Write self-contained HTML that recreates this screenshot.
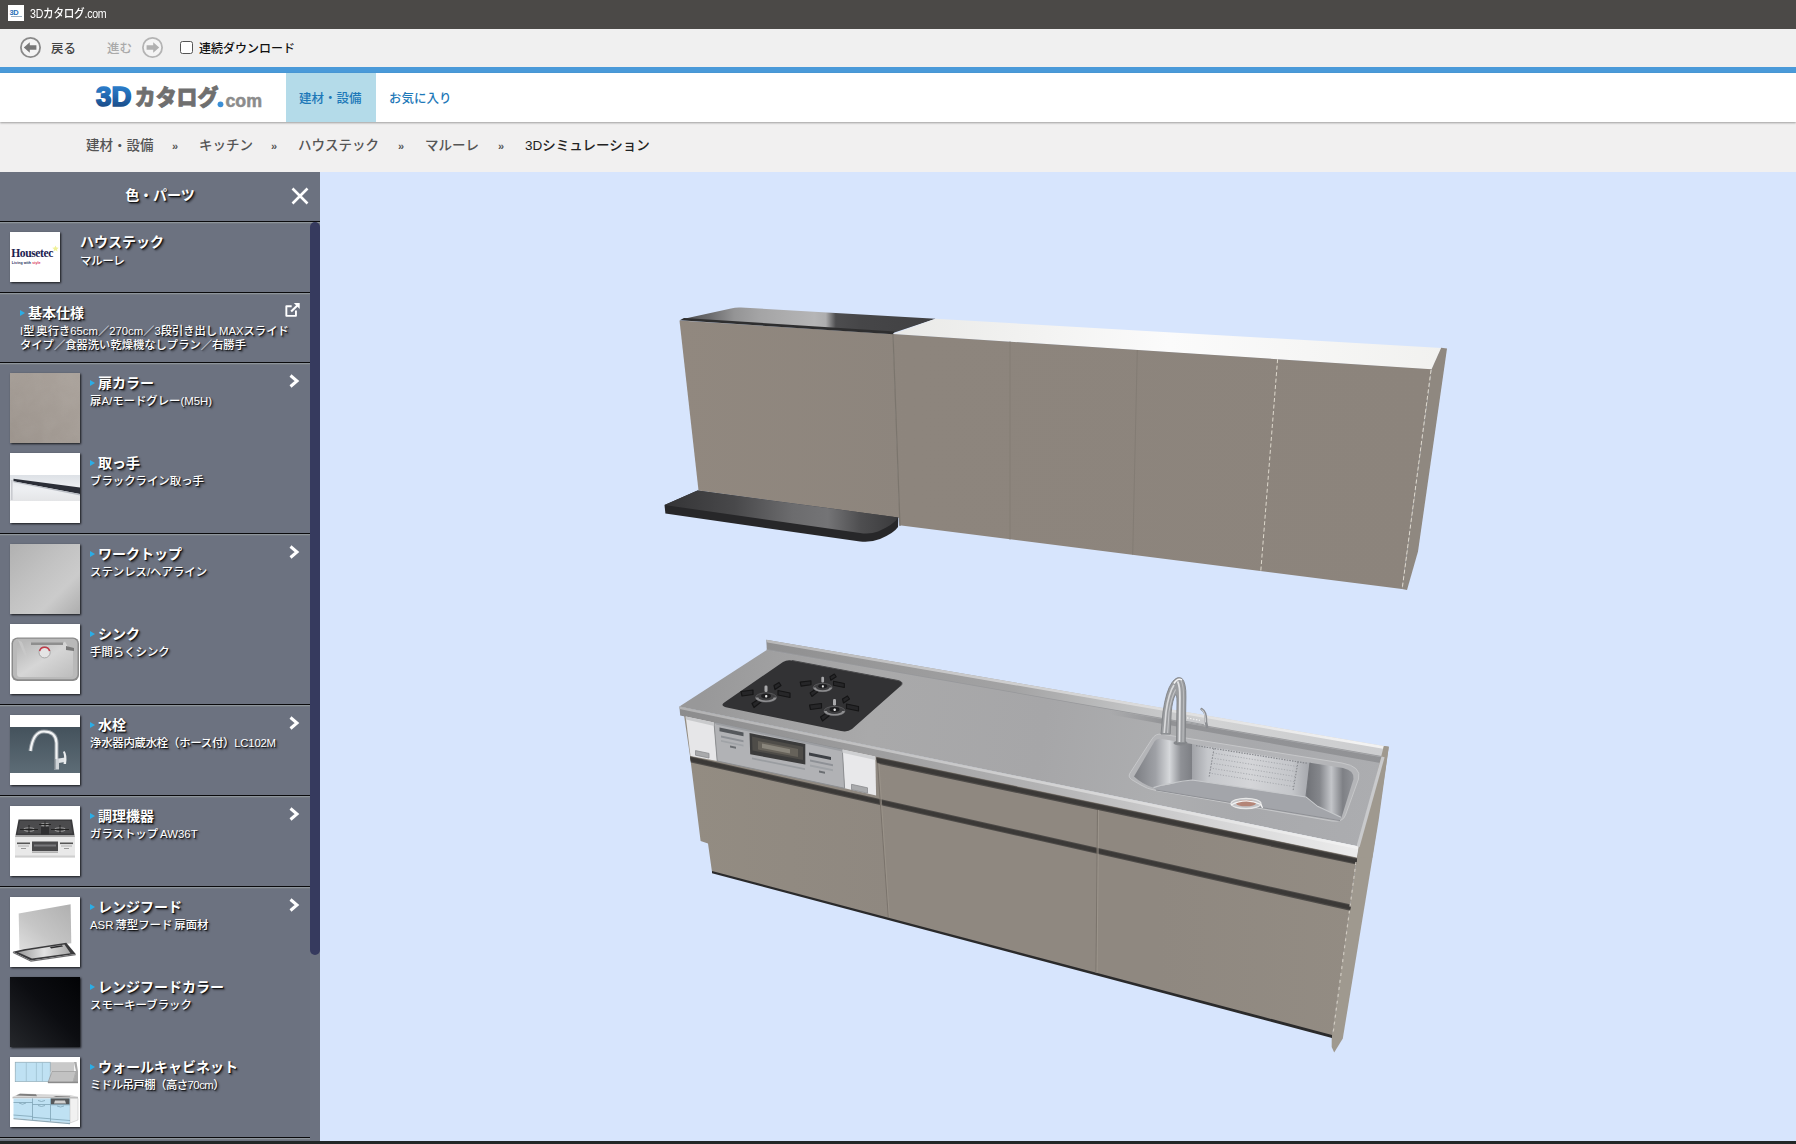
<!DOCTYPE html>
<html lang="ja"><head><meta charset="utf-8"><title>3Dカタログ.com</title>
<style>
*{box-sizing:border-box;margin:0;padding:0}
html,body{width:1796px;height:1144px;overflow:hidden;background:#d7e5fd;font-family:"Liberation Sans","Noto Sans CJK JP",sans-serif;}
#titlebar{position:absolute;left:0;top:0;width:1796px;height:29px;background:#4b4947;color:#fff;font-size:12px;font-weight:500}
#titlebar .ico{position:absolute;left:8px;top:5px;width:16px;height:16px;background:#fff;}
#titlebar .t{position:absolute;left:30px;top:6px;line-height:17px;font-size:12px;letter-spacing:-0.3px;transform:scaleX(.885);transform-origin:0 0;white-space:nowrap}
#toolbar{position:absolute;left:0;top:29px;width:1796px;height:38px;background:#f0f0f0;font-size:12.5px;color:#333;font-weight:500}
#bluebar{position:absolute;left:0;top:67px;width:1796px;height:6px;background:#4a9ad9}
#header{position:absolute;left:0;top:73px;width:1796px;height:49px;background:#fff;box-shadow:0 1px 2px rgba(0,0,0,.35);z-index:3}
#crumb{position:absolute;left:0;top:122px;width:1796px;height:50px;background:#f1f0f0;font-size:13.5px;color:#555;font-weight:500}
#side{position:absolute;left:0;top:172px;width:320px;height:969px;background:#6c7280;overflow:hidden;color:#fff}
#canvas{position:absolute;left:320px;top:172px;width:1476px;height:969px;background:#d7e5fd}
#bottombar{position:absolute;left:0;top:1141px;width:1796px;height:3px;background:#222727;z-index:5}
.sh{text-shadow:1px 1px 1px rgba(0,0,0,.85),2px 2px 2px rgba(0,0,0,.45)}
.hline{position:absolute;left:0;width:310px;height:3px;background:linear-gradient(#0a0a0c 0,#0a0a0c 1.2px,#8d949b 1.2px,#8d949b 2.2px,#747a83 2.2px)}
.thumb svg{display:block}
.thumb{position:absolute;left:10px;width:70px;height:70px;background:#fff;box-shadow:1px 1px 2px rgba(0,0,0,.8);overflow:hidden}
.it{position:absolute;left:98px;font-size:14px;font-weight:bold;line-height:18px;white-space:nowrap}
.it:before{content:"";position:absolute;left:-8.5px;top:5.5px;border-left:5.5px solid #2badE6;border-top:3.5px solid transparent;border-bottom:3.5px solid transparent}
.ds{font-weight:500;word-spacing:-1.2px;position:absolute;left:90px;font-size:11.4px;line-height:15px;white-space:nowrap}
.gg{position:absolute;top:15px;line-height:18px;font-size:11px;font-weight:bold;color:#555}
.chev{position:absolute;left:288px;width:12px;height:14px}
</style></head><body>
<div id="titlebar"><div class="ico"><span style="position:absolute;left:1.5px;top:3.5px;font-size:7.5px;line-height:8px;font-weight:bold;color:#2a6fb8;letter-spacing:-.5px;font-family:'Liberation Sans',sans-serif">3D</span><span style="position:absolute;left:2.5px;top:10.6px;width:11px;height:1.6px;background:#9ab0c4;"></span></div><div class="t">3Dカタログ.com</div></div>
<div id="toolbar">
<svg style="position:absolute;left:19px;top:7px" width="23" height="23" viewBox="0 0 23 23"><circle cx="11.5" cy="11.5" r="9.6" fill="#f4f4f4" stroke="#8a8a8a" stroke-width="1.8"/><path d="M4.8 11.5 L10.8 6.2 V9.2 H17.4 V13.8 H10.8 V16.800 Z" fill="#777"/></svg>
<span style="position:absolute;left:51px;top:12px;line-height:16px;color:#444">戻る</span>
<span style="position:absolute;left:107px;top:12px;line-height:16px;color:#aaa">進む</span>
<svg style="position:absolute;left:141px;top:7px" width="23" height="23" viewBox="0 0 23 23"><circle cx="11.5" cy="11.5" r="9.6" fill="#f4f4f4" stroke="#b4b4b4" stroke-width="1.8"/><path d="M18.2 11.5 L12.2 6.2 V9.2 H5.6 V13.8 H12.2 V16.8 Z" fill="#b0b0b0"/></svg>
<span style="position:absolute;left:180px;top:12px;width:13px;height:13px;border:1px solid #555;border-radius:2.5px;background:#fff"></span>
<span style="position:absolute;left:199px;top:12px;line-height:16px;color:#111;font-size:12px">連続ダウンロード</span>
</div>
<div id="bluebar"></div>
<div id="header">
<svg id="logo" style="position:absolute;left:90px;top:8px" width="180" height="34" viewBox="90 81 180 34">
<defs><linearGradient id="lg3d" x1="0" y1="87" x2="0" y2="107" gradientUnits="userSpaceOnUse"><stop offset="0" stop-color="#2b7cc8"/><stop offset=".5" stop-color="#2166ae"/><stop offset="1" stop-color="#1b4c88"/></linearGradient></defs>
<text x="96" y="106.4" font-family="'Liberation Sans',sans-serif" font-weight="bold" font-size="27.6" fill="url(#lg3d)" stroke="url(#lg3d)" stroke-width="1.6" stroke-linejoin="miter" textLength="35.4" lengthAdjust="spacingAndGlyphs">3D</text>
<text x="134.8" y="105" font-family="'Noto Sans CJK JP','Liberation Sans',sans-serif" font-weight="900" font-size="21.6" fill="#6f6f6f" stroke="#6f6f6f" stroke-width=".8" textLength="83.5" lengthAdjust="spacingAndGlyphs">カタログ</text>
<circle cx="220.5" cy="104.3" r="2.9" fill="#3b8fd6"/>
<text x="225.4" y="107" font-family="'Liberation Sans',sans-serif" font-weight="bold" font-size="17.6" fill="#8c8c8c" stroke="#8c8c8c" stroke-width=".5" textLength="36.6" lengthAdjust="spacingAndGlyphs">com</text>
</svg>
<div style="position:absolute;left:286px;top:0;width:90px;height:49px;background:#b4dbe9"></div>
<span style="position:absolute;left:299px;top:18px;font-size:12.5px;line-height:16px;color:#1d78b8;font-weight:500">建材・設備</span>
<span style="position:absolute;left:389px;top:18px;font-size:12.5px;line-height:16px;color:#1d78b8;font-weight:500">お気に入り</span>
</div>
<div id="crumb">
<span style="position:absolute;left:86px;top:15px;line-height:18px">建材・設備</span>
<span class="gg" style="left:172px">»</span>
<span style="position:absolute;left:199px;top:15px;line-height:18px">キッチン</span>
<span class="gg" style="left:271px">»</span>
<span style="position:absolute;left:298px;top:15px;line-height:18px">ハウステック</span>
<span class="gg" style="left:398px">»</span>
<span style="position:absolute;left:425px;top:15px;line-height:18px">マルーレ</span>
<span class="gg" style="left:498px">»</span>
<span style="position:absolute;left:525px;top:15px;line-height:18px;color:#222">3Dシミュレーション</span>
</div>
<div id="side">
<div class="sh" style="position:absolute;left:0;top:13px;width:320px;text-align:center;font-size:14px;font-weight:bold;line-height:20px">色・パーツ</div>
<svg style="position:absolute;left:291px;top:15px" width="18" height="18" viewBox="0 0 18 18"><path d="M1.5 1.5 L16.5 16.5 M16.5 1.5 L1.5 16.5" stroke="#fff" stroke-width="2.6"/></svg>
<div class="hline" style="top:49px;width:320px"></div>
<div id="sbar" style="position:absolute;left:310px;top:50px;width:10px;height:733px;background:#363a5e;border-radius:5px 5px 5px 5px"></div>
<div class="thumb" id="t0" style="top:60px;width:50px;height:50px"><div style="position:absolute;left:1.2px;top:16.3px;font-family:'Liberation Serif',serif;font-weight:bold;font-size:11.6px;line-height:12px;color:#1c2250;letter-spacing:-.42px;white-space:nowrap">Housetec</div>
<div style="position:absolute;left:1.8px;top:29.4px;font-size:3.6px;line-height:5px;color:#2a3060;white-space:nowrap;letter-spacing:.05px;font-weight:bold">Living with <span style="color:#d8305a">style</span></div>
<svg style="position:absolute;left:41.5px;top:13px;filter:blur(.4px)" width="7" height="7" viewBox="0 0 9 9"><path d="M4.5 0.5 L5.7 3.3 L8.6 3.6 L6.4 5.5 L7.1 8.4 L4.5 6.9 L1.9 8.4 L2.6 5.5 L0.4 3.6 L3.3 3.3Z" fill="#eef08c" opacity=".9"/></svg></div>
<div class="sh" style="position:absolute;left:80px;top:61px;font-size:14px;font-weight:bold;line-height:18px">ハウステック</div>
<div class="sh" style="position:absolute;left:80px;top:81px;font-size:11.5px;letter-spacing:-.4px;font-weight:500;line-height:16px">マルーレ</div>
<div class="hline" style="top:120px"></div>
<div class="it sh" style="left:28px;top:132px;font-size:14px">基本仕様</div>
<svg style="position:absolute;left:284px;top:130px" width="17.5" height="16" viewBox="0 0 16 15"><path d="M11 8 V13 H2 V4 H7" fill="none" stroke="#fff" stroke-width="1.8" stroke-linejoin="round"/><path d="M6.5 9 L13.5 2" stroke="#fff" stroke-width="2"/><path d="M9 1 H14.5 V6.5 Z" fill="#fff"/></svg>
<div class="ds sh" style="left:20px;top:152px;font-size:11.3px;line-height:14px">I型 奥行き65cm／270cm／3段引き出し MAXスライド<br>タイプ／食器洗い乾燥機なしプラン／右勝手</div>
<div class="hline" style="top:190px"></div>
<div class="thumb" id="t1" style="top:201px"><svg width="70" height="70"><defs><filter id="ns1" x="0" y="0" width="100%" height="100%"><feTurbulence type="fractalNoise" baseFrequency=".06" numOctaves="3" seed="4"/><feColorMatrix values="0 0 0 0 .5  0 0 0 0 .47  0 0 0 0 .44  .5 .3 0 0 -.28"/></filter></defs><linearGradient id="d1" x1="1" y1="0" x2="0" y2="1"><stop offset="0" stop-color="#aba39c"/><stop offset="1" stop-color="#9c948d"/></linearGradient><rect width="70" height="70" fill="url(#d1)"/><rect width="70" height="70" filter="url(#ns1)" opacity=".45"/></svg></div>
<div class="it sh" style="top:202px">扉カラー</div>
<div class="ds sh" style="top:222px">扉A/モードグレー(M5H)</div>
<svg class="chev" style="top:202px" viewBox="0 0 12 14"><path d="M2.5 1.5 L9 7 L2.5 12.5" fill="none" stroke="#fff" stroke-width="3" stroke-linejoin="miter"/></svg>
<div class="thumb" id="t2" style="top:281px"><svg width="70" height="70"><defs><linearGradient id="h2" x1="0" y1="0" x2="0" y2="1"><stop offset="0" stop-color="#dde1e6"/><stop offset=".5" stop-color="#eef0f3"/><stop offset="1" stop-color="#e4e5e7"/></linearGradient></defs><rect width="70" height="70" fill="#fff"/><rect y="22" width="70" height="26" fill="url(#h2)"/><polygon points="3.5,25.8 70,34.5 70,41 3.5,28.3" fill="#2b2e37"/><polygon points="3.5,28.3 70,41 70,42.5 3.5,29.2" fill="#b9bdc4"/><rect x="1" y="27" width="1.6" height="20" fill="#c9cbd0"/></svg></div>
<div class="it sh" style="top:282px">取っ手</div>
<div class="ds sh" style="top:302px">ブラックライン取っ手</div>
<div class="thumb" id="t3" style="top:372px"><svg width="70" height="70"><defs><linearGradient id="w3" x1="0" y1="0" x2="1" y2="1"><stop offset="0" stop-color="#b1b1b1"/><stop offset=".45" stop-color="#c3c3c3"/><stop offset=".7" stop-color="#cbcbcb"/><stop offset="1" stop-color="#adadad"/></linearGradient></defs><rect width="70" height="70" fill="url(#w3)"/></svg></div>
<div class="it sh" style="top:373px">ワークトップ</div>
<div class="ds sh" style="top:393px">ステンレス/ヘアライン</div>
<svg class="chev" style="top:373px" viewBox="0 0 12 14"><path d="M2.5 1.5 L9 7 L2.5 12.5" fill="none" stroke="#fff" stroke-width="3" stroke-linejoin="miter"/></svg>
<div class="thumb" id="t4" style="top:452px"><svg width="70" height="70"><defs><linearGradient id="s4" x1="0" y1="0" x2="1" y2="1"><stop offset="0" stop-color="#b4b4b4"/><stop offset=".5" stop-color="#d6d6d6"/><stop offset="1" stop-color="#bdbdbd"/></linearGradient></defs><rect width="70" height="70" fill="#fff"/><rect x="1.5" y="13.5" width="67.5" height="43.5" rx="6" fill="#8b8b8b"/><rect x="3" y="14.8" width="64.5" height="40.5" rx="5" fill="#b9b9b9"/><path d="M7,19 L20,17 L22,20 L52,20 L55,17.5 L58,23 L63,24.5 L63,50 Q63,53 60,53 L10,53 Q7,53 7,50 Z" fill="url(#s4)"/><path d="M21,18.5 L53,18.5 L53,21 L21,21Z" fill="#8e8e8e"/><path d="M56,22 L64,24 L64,27 L56,26Z" fill="#777"/><path d="M8,16 L14,30 L18,34 L12,18Z" fill="#c9c9c9" opacity=".8"/><circle cx="34.6" cy="28.3" r="5.6" fill="#e4e4e4" stroke="#9a9a9a" stroke-width=".8"/><path d="M29.6,27 A5.2,5.2 0 0 1 39.6,27" fill="none" stroke="#c03a48" stroke-width="1.6"/></svg></div>
<div class="it sh" style="top:453px">シンク</div>
<div class="ds sh" style="top:473px">手間らくシンク</div>
<div class="thumb" id="t5" style="top:543px"><svg width="70" height="70"><defs><linearGradient id="f5" x1="0" y1="0" x2="0" y2="1"><stop offset="0" stop-color="#44525c"/><stop offset="1" stop-color="#5d6c76"/></linearGradient></defs><rect width="70" height="70" fill="#fff"/><rect y="12" width="70" height="46" fill="url(#f5)"/><path d="M46.5,54 L46.5,28 Q46,16.5 34,16.5 Q23,16.5 20.5,36" fill="none" stroke="#8f979e" stroke-width="4.2"/><path d="M46.5,54 L46.5,28 Q46,16.5 34,16.5 Q23,16.5 20.5,36" fill="none" stroke="#f2f4f5" stroke-width="2.2"/><path d="M45.5,44 L55,42.5 L55,47 L45.5,48.5Z" fill="#dfe3e6"/><path d="M54.5,36 Q57.5,40 56,49 L53.5,49 Q55,41 53,37Z" fill="#e9ecee"/><rect x="44" y="44" width="5" height="10.5" fill="#cfd4d8"/><rect x="44" y="44" width="1.6" height="10.5" fill="#7d868d"/></svg></div>
<div class="it sh" style="top:544px">水栓</div>
<div class="ds sh" style="top:564px;letter-spacing:-.25px">浄水器内蔵水栓（ホース付）LC102M</div>
<svg class="chev" style="top:544px" viewBox="0 0 12 14"><path d="M2.5 1.5 L9 7 L2.5 12.5" fill="none" stroke="#fff" stroke-width="3" stroke-linejoin="miter"/></svg>
<div class="thumb" id="t6" style="top:634px"><svg width="70" height="70"><rect width="70" height="70" fill="#fff"/><polygon points="8.5,13.5 62,13.5 64.5,29.5 5.5,29.5" fill="#3a3a3c"/><polygon points="10,15 60.5,15 62.5,27.5 7.5,27.5" fill="#4b4b4d"/><g fill="none" stroke="#9a9a9a" stroke-width="1.1"><ellipse cx="19" cy="23.5" rx="5" ry="1.8"/><ellipse cx="35" cy="18.5" rx="3.6" ry="1.3"/><ellipse cx="50" cy="23.5" rx="5" ry="1.8"/></g><g stroke="#222" stroke-width="1"><path d="M10,23.5 H28 M19,19 V27 M41,23.5 H59 M50,19 V27 M29,18.5 H41 M35,15.5 V21.5"/></g><rect x="31" y="21" width="8" height="7.5" fill="#2f2f31"/><polygon points="5.5,29.5 64.5,29.5 65,31 5,31" fill="#a8a8a8"/><rect x="5" y="31" width="60" height="20.5" fill="#e9e9e9"/><rect x="5" y="49.5" width="60" height="2" fill="#cfcfcf"/><rect x="22" y="35.5" width="26" height="9.5" fill="#4a4a4c"/><rect x="24" y="38.5" width="22" height="2" fill="#77777a"/><rect x="22" y="45.5" width="26" height="1.2" fill="#9c9c9c"/><rect x="7" y="36.5" width="13" height="1.6" fill="#555"/><rect x="50" y="36.5" width="13" height="1.6" fill="#555"/><rect x="8" y="39.5" width="11" height="1" fill="#b0b0b0"/><rect x="51" y="39.5" width="11" height="1" fill="#b0b0b0"/><rect x="11" y="42" width="5" height="1" fill="#999"/><rect x="54" y="42" width="5" height="1" fill="#999"/></svg></div>
<div class="it sh" style="top:635px">調理機器</div>
<div class="ds sh" style="top:655px">ガラストップ AW36T</div>
<svg class="chev" style="top:635px" viewBox="0 0 12 14"><path d="M2.5 1.5 L9 7 L2.5 12.5" fill="none" stroke="#fff" stroke-width="3" stroke-linejoin="miter"/></svg>
<div class="thumb" id="t7" style="top:725px"><svg width="70" height="70"><defs><linearGradient id="h7" x1="1" y1="0" x2="0" y2="1"><stop offset="0" stop-color="#b0b0b0"/><stop offset=".6" stop-color="#c6c6c6"/><stop offset="1" stop-color="#dedede"/></linearGradient><linearGradient id="p7" x1="0" y1="0" x2="1" y2="0"><stop offset="0" stop-color="#9a9a9a"/><stop offset=".5" stop-color="#e2e2e2"/><stop offset="1" stop-color="#a8a8a8"/></linearGradient></defs><rect width="70" height="70" fill="#fff"/><polygon points="8.7,16.6 60.6,7.2 61.3,46.2 9.4,52.7" fill="url(#h7)"/><polygon points="2.9,54.8 13.7,52.3 56.3,45.8 65.7,57 20.9,63.5" fill="#3a3a3c"/><polygon points="8,55.2 16,53.6 54.5,47.6 60.5,56.3 22,61.5" fill="url(#p7)"/><polygon points="2.9,54.8 20.9,63.5 65.7,57 65.7,58.2 20.9,64.8 2.9,56" fill="#6d6d6f"/><polygon points="40,50 52,48.2 53,49.6 41,51.4" fill="#2a2a2c"/></svg></div>
<div class="it sh" style="top:726px">レンジフード</div>
<div class="ds sh" style="top:746px">ASR 薄型フード 扉面材</div>
<svg class="chev" style="top:726px" viewBox="0 0 12 14"><path d="M2.5 1.5 L9 7 L2.5 12.5" fill="none" stroke="#fff" stroke-width="3" stroke-linejoin="miter"/></svg>
<div class="thumb" id="t8" style="top:805px"><svg width="70" height="70"><defs><linearGradient id="b8" x1="1" y1="0" x2="0" y2="1"><stop offset="0" stop-color="#020305"/><stop offset=".45" stop-color="#0c0d11"/><stop offset="1" stop-color="#25272b"/></linearGradient></defs><rect width="70" height="70" fill="url(#b8)"/></svg></div>
<div class="it sh" style="top:806px">レンジフードカラー</div>
<div class="ds sh" style="top:826px">スモーキーブラック</div>
<div class="thumb" id="t9" style="top:885px"><svg width="70" height="70"><rect width="70" height="70" fill="#fff"/><rect x="5.2" y="5.2" width="59" height="9.5" fill="#c9c9c9"/><rect x="5.2" y="5.2" width="35" height="19.5" fill="#bfe1f3" stroke="#8aa3b0" stroke-width=".6"/><path d="M16.3,5.2 V24.7 M26.4,5.2 V24.7 M32.4,5.2 V24.7" stroke="#9bbccc" stroke-width=".7"/><polygon points="42,14.5 66,14.5 63,25.5 38,25.5" fill="#c2c2c2" stroke="#8d8d8d" stroke-width=".6"/><polygon points="64,5 66.5,5 68,14.5 68,26 63,25.5 66,14.5" fill="#a9a9a9"/><rect x="38" y="24.6" width="30" height="1.6" fill="#8a8a8a"/><polygon points="2.5,39.8 10,36.5 60,38 68,39.8" fill="#d6d6d6"/><polygon points="6,38.6 10,36.8 26,37.3 27,39.2" fill="#7f7f7f"/><polygon points="42,40.5 46,39 60,39.5 61,41" fill="#6e6e6e"/><rect x="2.5" y="39.8" width="65.5" height="1.6" fill="#bdbdbd"/><polygon points="3.5,41.4 60,41.4 60,66 3.5,61" fill="#bfe1f3"/><polygon points="60,41.4 68,41.4 68,63 60,66" fill="#f1f1f1" stroke="#bbb" stroke-width=".5"/><polygon points="41,41.4 59.5,41.4 59.5,47.5 41,47.5" fill="#55585a"/><polygon points="45,43.5 55,43.5 56,46.5 44,46.5" fill="#d0d0d0"/><path d="M22.5,41.4 V63 M40.5,41.4 V64.5 M3.5,45.5 H22.5 M22.5,47.5 H40.5 M40.500,47.8 H60 M3.5,58 L22.5,59.5 M22.5,60.3 L40.5,61.8 M40.5,62 L60,63.5" stroke="#7fa3b5" stroke-width=".8" fill="none"/><path d="M9,46 Q12.5,48.5 16,46 M28,43.5 Q31.5,45.5 35,43.5 M28,48.5 Q31.5,50.5 35,48.5 M47,49 Q50.5,51 54,49" stroke="#7fa3b5" stroke-width=".8" fill="none"/><polygon points="3.5,61 60,66 60,67.2 3.5,62.2" fill="#8fa9b6"/></svg></div>
<div class="it sh" style="top:886px">ウォールキャビネット</div>
<div class="ds sh" style="top:906px;letter-spacing:-.55px">ミドル吊戸棚（高さ70cm）</div>
<div class="hline" style="top:361px"></div>
<div class="hline" style="top:532px"></div>
<div class="hline" style="top:623px"></div>
<div class="hline" style="top:714px"></div>
<div class="hline" style="top:965px"></div>
</div>
<div id="canvas"><!--SCENE-->
<svg id="scene" style="position:absolute;left:0;top:0" width="1476" height="969" viewBox="320 172 1476 969">
<defs>
<linearGradient id="gHoodTop" x1="684" y1="0" x2="935" y2="0" gradientUnits="userSpaceOnUse"><stop offset="0" stop-color="#4e4e50"/><stop offset=".1" stop-color="#6a6a6c"/><stop offset=".2" stop-color="#949495"/><stop offset=".3" stop-color="#a4a4a5"/><stop offset=".4" stop-color="#acacad"/><stop offset=".52" stop-color="#b5b5b6"/><stop offset=".565" stop-color="#adadae"/><stop offset=".605" stop-color="#4d4d4f"/><stop offset=".7" stop-color="#464648"/><stop offset="1" stop-color="#404042"/></linearGradient>
<linearGradient id="gShelf" x1="664" y1="0" x2="898" y2="0" gradientUnits="userSpaceOnUse"><stop offset="0" stop-color="#343436"/><stop offset=".3" stop-color="#48484a"/><stop offset=".55" stop-color="#6c6c6e"/><stop offset=".7" stop-color="#747476"/><stop offset=".84" stop-color="#4e4e50"/><stop offset="1" stop-color="#3a3a3c"/></linearGradient>
<linearGradient id="gWhiteTop" x1="893" y1="0" x2="1446" y2="0" gradientUnits="userSpaceOnUse"><stop offset="0" stop-color="#e9e9e7"/><stop offset=".5" stop-color="#fbfbfb"/><stop offset="1" stop-color="#f1f1ef"/></linearGradient>
<linearGradient id="gCab" x1="680" y1="0" x2="1440" y2="0" gradientUnits="userSpaceOnUse"><stop offset="0" stop-color="#91887f"/><stop offset=".3" stop-color="#8d857d"/><stop offset="1" stop-color="#8c847c"/></linearGradient>
<linearGradient id="gCounter" x1="700" y1="700" x2="1380" y2="800" gradientUnits="userSpaceOnUse"><stop offset="0" stop-color="#989899"/><stop offset=".1" stop-color="#a0a0a1"/><stop offset=".25" stop-color="#a9a9aa"/><stop offset=".5" stop-color="#a6a6a8"/><stop offset=".68" stop-color="#adaeb0"/><stop offset=".8" stop-color="#a8a9ac"/><stop offset="1" stop-color="#acadb0"/></linearGradient>
<linearGradient id="gBand" x1="0" y1="0" x2="0" y2="1"><stop offset="0" stop-color="#d2d2d2"/><stop offset=".35" stop-color="#b4b4b4"/><stop offset="1" stop-color="#9b9b9b"/></linearGradient>
<linearGradient id="gLow" x1="690" y1="0" x2="1360" y2="0" gradientUnits="userSpaceOnUse"><stop offset="0" stop-color="#938c82"/><stop offset=".3" stop-color="#8f8880"/><stop offset=".7" stop-color="#8f8880"/><stop offset="1" stop-color="#938c83"/></linearGradient>

<linearGradient id="gSinkL" x1="1136" y1="0" x2="1192" y2="0" gradientUnits="userSpaceOnUse"><stop offset="0" stop-color="#7e8085"/><stop offset=".35" stop-color="#9fa1a6"/><stop offset=".6" stop-color="#d6d8db"/><stop offset=".8" stop-color="#8f9196"/><stop offset="1" stop-color="#7d7f84"/></linearGradient>
<linearGradient id="gSinkB" x1="1190" y1="0" x2="1310" y2="0" gradientUnits="userSpaceOnUse"><stop offset="0" stop-color="#9c9ea3"/><stop offset=".15" stop-color="#c6c8cc"/><stop offset=".5" stop-color="#d4d5d8"/><stop offset=".85" stop-color="#c4c6ca"/><stop offset="1" stop-color="#a4a6ab"/></linearGradient>
<linearGradient id="gSinkR" x1="1306" y1="0" x2="1352" y2="0" gradientUnits="userSpaceOnUse"><stop offset="0" stop-color="#6f7176"/><stop offset=".3" stop-color="#85878c"/><stop offset=".55" stop-color="#c3c5c9"/><stop offset=".8" stop-color="#7e8085"/><stop offset="1" stop-color="#8e9095"/></linearGradient>
<linearGradient id="gFaucet" x1="0" y1="0" x2="1" y2="0"><stop offset="0" stop-color="#8e9094"/><stop offset=".4" stop-color="#f2f2f2"/><stop offset="1" stop-color="#9b9da1"/></linearGradient>
<linearGradient id="gLip" x1="766" y1="0" x2="1384" y2="0" gradientUnits="userSpaceOnUse"><stop offset="0" stop-color="#8f8f90"/><stop offset=".4" stop-color="#a3a3a4"/><stop offset=".58" stop-color="#c0c1c2"/><stop offset=".72" stop-color="#d1d2d3"/><stop offset="1" stop-color="#cdced0"/></linearGradient>
<linearGradient id="gBand2" x1="679" y1="0" x2="1359" y2="0" gradientUnits="userSpaceOnUse"><stop offset="0" stop-color="#8c8c8d"/><stop offset=".3" stop-color="#9e9e9f"/><stop offset=".55" stop-color="#b4b4b5"/><stop offset=".8" stop-color="#d6d6d7"/><stop offset="1" stop-color="#ececec"/></linearGradient>
<linearGradient id="gShade" x1="1110" y1="0" x2="1384" y2="0" gradientUnits="userSpaceOnUse"><stop offset="0" stop-color="#8f9093" stop-opacity="0"/><stop offset=".2" stop-color="#8f9093" stop-opacity=".9"/><stop offset="1" stop-color="#909194" stop-opacity=".95"/></linearGradient>
<linearGradient id="gHi" x1="679" y1="0" x2="1359" y2="0" gradientUnits="userSpaceOnUse"><stop offset="0" stop-color="#b2b2b3"/><stop offset=".4" stop-color="#c8c8c9"/><stop offset="1" stop-color="#f2f2f2"/></linearGradient>
</defs>
<!-- UPPER: hood -->
<g id="upper">
<path d="M683,319 L731,308.4 Q736,307.2 741,307.5 L935.5,318.8 L893,333 Z" fill="url(#gHoodTop)"/>
<polygon points="679.5,320.5 893,334 899.5,518 698.5,490.5" fill="url(#gCab)"/>
<polygon points="679.8,320.3 684,318 894.5,331.4 893,334.2" fill="#2e2e2f"/>
<!-- right wall cabinets -->
<polygon points="893,334 935.5,318.8 1441.5,348 1431.6,369.5" fill="url(#gWhiteTop)"/>
<polygon points="1431.6,369.2 1441.2,347.8 1447,348.6 1418,551.5 1407,590 1402,589" fill="#8f8880"/>
<polygon points="893,334 1431.6,369.2 1402,589 899.3,525.3" fill="url(#gCab)"/>
<line x1="893" y1="334" x2="900" y2="526" stroke="#7b756d" stroke-width="1.2"/>
<line x1="1010" y1="341.5" x2="1010" y2="539.5" stroke="#837c74" stroke-width="1"/>
<line x1="1137.3" y1="350" x2="1132.7" y2="554.5" stroke="#837c74" stroke-width="1"/>
<line x1="1277.6" y1="359.2" x2="1260.8" y2="571" stroke="#e2dcd1" stroke-width=".95" stroke-dasharray="4 2.5"/>
<line x1="1431" y1="370" x2="1402.3" y2="588" stroke="#e2dcd1" stroke-width=".95" stroke-dasharray="4 2.5"/>
<!-- shelf -->
<path d="M664.5,505 L697.5,490.5 L898.3,517.5 L898,527 Q894,533 880,539 Q871,542.6 860,541.4 L665.4,513.6 Z" fill="#272729"/>
<path d="M664.5,505 L697.5,490.5 L898.3,517.5 Q894,524.5 878,531.5 Q870,534.5 860,533 Z" fill="url(#gShelf)"/>
</g>
<!-- LOWER -->
<g id="lower">
<!-- side panel right -->
<polygon points="1384,746 1388.8,746.8 1378.7,820 1342.8,1038.4 1334.2,1052.6 1331.7,1047 1331.7,1036 1357,856" fill="#9f998f"/>
<!-- front face -->
<polygon points="684,715 1357,857 1332,1036.5 712,872 708,843.5 700.6,841 690,756" fill="url(#gLow)"/>
<!-- kick line -->
<polygon points="712,871 1332,1035 1332,1038 712,873.2" fill="#2a2a2b"/>
<!-- counter back lip -->
<polygon points="766.3,639.8 1384,746 1384.5,758 766.8,650" fill="url(#gLip)"/>
<polygon points="766.3,639.8 1384,746 1383,748.8 767.5,642.4" fill="url(#gHi)"/>
<polygon points="766.8,649 1384.4,756.5 1384.5,758.5 766.8,650.6" fill="#97989b"/>
<!-- counter top -->
<polygon points="766.8,650 1383.5,757 1358.7,846.4 679.4,706.6" fill="url(#gCounter)"/>
<polygon points="1110,710 1384.4,757.8 1383,763.5 1110,714.5" fill="url(#gShade)"/>
<!-- front band -->
<polygon points="679.4,706.6 1358.7,846.4 1357,857.5 680.2,715.5" fill="url(#gBand2)"/>
<polygon points="679.4,706.6 1358.7,846.4 1358.2,849.2 679.6,709" fill="url(#gHi)"/>
<!-- white panels + control -->
<polygon points="685.7,716.5 714,722.6 717.2,761 690.5,756" fill="#e6e6e8"/>
<polygon points="842.3,749.4 875.3,756.5 876.1,795.5 844.6,788.3" fill="#e8e8ea"/>
<polygon points="714,722.6 842.3,749.4 844.6,788.3 717.2,761" fill="#b1b2b5" stroke="#8d8f92" stroke-width="1"/>
<polygon points="749.5,733 805.3,744.1 805.3,764.5 750.2,754.3" fill="#3b3b3b"/>
<polygon points="752,736.5 803,746.7 803,760 752.5,750.5" fill="#4e4c48"/>
<!-- handle lines -->
<polygon points="690,756.3 1351,904.6 1350.1,910.8 690.9,762.4" fill="#4e4b48"/><polygon points="690.2,757.3 1350.9,905.6 1350.3,909.6 690.8,761.3" fill="#3b3937"/>
<polygon points="876.3,757 1357.2,858.2 1356.3,864.6 877,763.4" fill="#4e4b48"/><polygon points="876.4,758 1357,859.2 1356.5,863.4 877,762.2" fill="#3b3937"/>
<!-- vertical division -->
<line x1="877.6" y1="763" x2="888.3" y2="917" stroke="#7b746c" stroke-width="1.1"/><line x1="878.8" y1="763" x2="889.3" y2="917" stroke="#9d968c" stroke-width=".7"/>
<line x1="1097.5" y1="810" x2="1096" y2="973" stroke="#7b746c" stroke-width="1.1"/><line x1="1098.6" y1="810" x2="1097" y2="973" stroke="#a29b91" stroke-width=".7"/>
<line x1="1356" y1="862" x2="1333" y2="1034" stroke="#cfc9bf" stroke-width="1.2" stroke-dasharray="3 4"/>
<!-- cooktop -->
<path d="M792,660.5 L898,680.5 Q905,682.2 900,686.5 L852,729 Q847.5,732.5 841,731 L727,707.5 Q719,705.5 725,702 L783,662 Q787,659.5 792,660.5 Z" fill="#323234"/>

<!-- cooktop highlight edge -->
<path d="M792,660.5 L898,680.5 Q905,682.2 900,686.5" fill="none" stroke="#4a4a4c" stroke-width="1"/>

<g transform="translate(766.0 697.5) scale(1.00)"><path d="M-25,-6 L-13,-7.5 L-13,-3 L-24,-1.5 Z M12,-7 L24,-4.5 L24,0 L12,-2.5 Z M-14,6 L-8,2 L-5,4.5 L-12,10 Z M8,-12 L13,-15 L15,-12 L9,-8 Z" fill="#262628" stroke="#151516" stroke-width="1.2" stroke-linejoin="round"/><ellipse cx="0" cy="0" rx="10.5" ry="4.6" fill="#3e3e40"/><ellipse cx="0" cy="0" rx="10.5" ry="4.6" fill="none" stroke="#58585a" stroke-width="1"/><path d="M-10.5,0 A10.5,4.6 0 0 0 10.5,0 L7.6,0 A7.6,3 0 0 1 -7.6,0 Z" fill="#8e8e90"/><ellipse cx="0" cy="-1.5" rx="5" ry="2.4" fill="#1d1d1f"/><rect x="-1.5" y="-12" width="3" height="6.5" rx="1.2" fill="#a9a9ab"/><rect x="-0.9" y="-2.5" width="2.2" height="2.6" rx=".8" fill="#e8e8e8"/></g><g transform="translate(822.7 687.5) scale(0.90)"><path d="M-25,-6 L-13,-7.5 L-13,-3 L-24,-1.5 Z M12,-7 L24,-4.5 L24,0 L12,-2.5 Z M-14,6 L-8,2 L-5,4.5 L-12,10 Z M8,-12 L13,-15 L15,-12 L9,-8 Z" fill="#262628" stroke="#151516" stroke-width="1.2" stroke-linejoin="round"/><ellipse cx="0" cy="0" rx="10.5" ry="4.6" fill="#3e3e40"/><ellipse cx="0" cy="0" rx="10.5" ry="4.6" fill="none" stroke="#58585a" stroke-width="1"/><path d="M-10.5,0 A10.5,4.6 0 0 0 10.5,0 L7.6,0 A7.6,3 0 0 1 -7.6,0 Z" fill="#8e8e90"/><ellipse cx="0" cy="-1.5" rx="5" ry="2.4" fill="#1d1d1f"/><rect x="-1.5" y="-12" width="3" height="6.5" rx="1.2" fill="#a9a9ab"/><rect x="-0.9" y="-2.5" width="2.2" height="2.6" rx=".8" fill="#e8e8e8"/></g><g transform="translate(834.5 711.0) scale(1.00)"><path d="M-25,-6 L-13,-7.5 L-13,-3 L-24,-1.5 Z M12,-7 L24,-4.5 L24,0 L12,-2.5 Z M-14,6 L-8,2 L-5,4.5 L-12,10 Z M8,-12 L13,-15 L15,-12 L9,-8 Z" fill="#262628" stroke="#151516" stroke-width="1.2" stroke-linejoin="round"/><ellipse cx="0" cy="0" rx="10.5" ry="4.6" fill="#3e3e40"/><ellipse cx="0" cy="0" rx="10.5" ry="4.6" fill="none" stroke="#58585a" stroke-width="1"/><path d="M-10.5,0 A10.5,4.6 0 0 0 10.5,0 L7.6,0 A7.6,3 0 0 1 -7.6,0 Z" fill="#8e8e90"/><ellipse cx="0" cy="-1.5" rx="5" ry="2.4" fill="#1d1d1f"/><rect x="-1.5" y="-12" width="3" height="6.5" rx="1.2" fill="#a9a9ab"/><rect x="-0.9" y="-2.5" width="2.2" height="2.6" rx=".8" fill="#e8e8e8"/></g>
<!-- control panel details -->
<polygon points="719.5,727.5 743.5,732.5 743.5,736.2 719.5,731.2" fill="#55585c"/>
<polygon points="721,735.5 743.5,740.2 743.5,742.2 721,737.5" fill="#8e9196"/>
<polygon points="721,740 743.5,744.7 743.5,746.5 721,741.8" fill="#a0a3a7"/>
<polygon points="730,745.5 736,746.7 736,748.7 730,747.5" fill="#6b6e72"/>
<polygon points="809,752.5 831,757 831,760 809,755.5" fill="#3e4146"/>
<polygon points="810,759.5 833,764.3 833,766.3 810,761.5" fill="#8e9196"/>
<polygon points="810,764.5 833,769.3 833,771.3 810,766.5" fill="#a0a3a7"/>
<polygon points="819,770.5 825,771.7 825,773.7 819,772.5" fill="#6b6e72"/>
<polygon points="752,757.5 805,768.3 805,770 752,759.2" fill="#9a9da1"/>
<polygon points="716,722.8 842.3,749.6 842.3,751.4 716,724.6" fill="#9c9ea2"/>
<polygon points="758,741 798,749 798,757 758,749.5" fill="#66625a"/>
<polygon points="762,743.5 790,749.2 790,753.5 762,748" fill="#8a867c"/>
<!-- vents -->
<polygon points="695.5,750.6 709,753.4 709,758 695.5,755.2" fill="#a9aaac" stroke="#8a8b8e" stroke-width=".8"/>
<polygon points="851.5,784.3 867.5,787.8 867.5,793.2 851.5,789.7" fill="#a9aaac" stroke="#8a8b8e" stroke-width=".8"/>
<!-- white panel shading -->
<polygon points="685.7,716.5 714,722.6 714.2,726 685.9,719.6" fill="#c9cacc"/>
<polygon points="842.3,749.4 875.3,756.5 875.4,760 842.4,752.8" fill="#cfd0d2"/>

<!-- SINK -->
<g id="sink">
<path d="M1162,734.2 L1342,763 Q1362,766.5 1358.5,779 L1345.5,815 Q1343,822.5 1332,821 L1156,790.5 Q1147,789 1140,784.5 L1131.5,779.5 Q1127,776.5 1131,771.5 L1152,739 Q1155.5,733.2 1162,734.2 Z" fill="#b4b5b8" stroke="#c6c7c9" stroke-width="1"/>
<!-- floor -->
<path d="M1153,787.5 L1192,780 L1306,797 L1317,806 L1341.5,817.5 L1340,820.3 L1156,789.8 Z" fill="#a3a5aa"/>
<!-- left wall -->
<path d="M1134,776.5 L1154.5,741.5 Q1156.5,738.2 1160.5,738.8 L1192,744 L1192,780 L1153,787.5 Q1142,784 1134,776.5 Z" fill="url(#gSinkL)"/>
<!-- back wall / basket -->
<path d="M1192,744 L1310,762.8 L1306,797 L1192,780 Z" fill="url(#gSinkB)"/>
<g stroke="#9d9fa4" stroke-width=".8" stroke-dasharray="1.2 1.6" fill="none">
<path d="M1213,753 L1297,766.5"/><path d="M1212,758 L1296,771.5"/><path d="M1211,763 L1295,776.5"/><path d="M1210,768 L1294,781.5"/><path d="M1209,773 L1293,786.5"/>
</g>
<path d="M1196,745.6 L1308,763.4" stroke="#85878c" stroke-width="1.2" fill="none" stroke-dasharray="1.5 1.2"/>
<path d="M1214,748.5 L1209,777.5 M1298,762 L1293,791" stroke="#85878c" stroke-width="1" stroke-dasharray="1.5 1.5" fill="none"/>
<!-- right wall -->
<path d="M1310,762.8 L1343,768 Q1354.5,770.5 1353.5,779 L1341.5,817.5 L1317,806 L1306,797 Z" fill="url(#gSinkR)"/>
<path d="M1310,762.8 L1306,797 L1317,806" fill="none" stroke="#74767b" stroke-width="1.2"/>
<!-- floor ridge highlight -->
<path d="M1153.5,787.6 Q1172,782 1192,780 L1306,797 L1317,806 L1341,817.3" fill="none" stroke="#c6c8cb" stroke-width="1.2"/>
<path d="M1156,790 L1340,820.6" fill="none" stroke="#8e9095" stroke-width="1"/>
<!-- drain -->
<ellipse cx="1246" cy="803.5" rx="15" ry="5.2" fill="#c3c4c7" stroke="#e8e8e8" stroke-width="1.2"/>
<ellipse cx="1246" cy="803.2" rx="10" ry="3.1" fill="#b48577"/>
<path d="M1231,805 Q1246,797 1261,804.5 L1262.5,808" fill="none" stroke="#f4f4f4" stroke-width="1.3"/>
</g>
<!-- FAUCET -->
<g id="faucet">
<ellipse cx="1180.5" cy="743" rx="7" ry="2.4" fill="#86888c"/>
<path d="M1185,718.8 L1204,722.4" stroke="#c9cacc" stroke-width="4.6" stroke-linecap="round"/>
<path d="M1187,717.9 L1200,720.4" stroke="#f0f0f0" stroke-width="1.2" stroke-dasharray="1.6 1.4"/>
<path d="M1185,721.2 L1204,724.8" stroke="#9a9c9f" stroke-width="1"/>
<path d="M1201.6,709.2 Q1206.3,711.5 1206,722 L1207,727" fill="none" stroke="#8b8d91" stroke-width="2.6" stroke-linecap="round"/>
<path d="M1202,709.6 Q1205.6,712 1205.4,722" fill="none" stroke="#d5d6d8" stroke-width="1" stroke-linecap="round"/>
<path d="M1161,734 L1163,712 Q1166,691 1172,682.5 Q1177,675.5 1182,678.5 Q1186.2,683 1185.9,697 L1185.2,743 L1176.5,743 L1177,702 Q1177,693 1175.2,695 Q1172.4,700 1171.2,712 L1170.2,734 Z" fill="#9b9da0" stroke="#808286" stroke-width=".9"/>
<path d="M1164.2,733 L1166,712 Q1168.6,693 1174,685" fill="none" stroke="#d9dadc" stroke-width="1.7"/>
<path d="M1167.6,733 L1169,712 Q1171,698 1175.6,689.5" fill="none" stroke="#c3c4c7" stroke-width="1.1"/>
<path d="M1179.4,742 L1179.9,698 Q1180,686 1177.6,681.4" fill="none" stroke="#e2e3e5" stroke-width="1.8"/>
<path d="M1183,742 L1183.6,698 Q1183.8,686 1181,680.5" fill="none" stroke="#babbbd" stroke-width="1.1"/>
<path d="M1174,683.5 Q1177.5,677.5 1182,680" fill="none" stroke="#f4f4f4" stroke-width="1.6"/>
</g>
<!-- counter right end cap -->
<polygon points="1383.8,746 1388.8,746.800 1372.2,858 1357,857.5 1358.7,846.4" fill="#9f998f"/>
<polygon points="1381.5,756.5 1384.6,757.2 1359.6,847 1356.6,846" fill="#c9cacc"/>
</g>
</svg>

<!--/SCENE--></div>
<div id="bottombar"></div>
</body></html>
